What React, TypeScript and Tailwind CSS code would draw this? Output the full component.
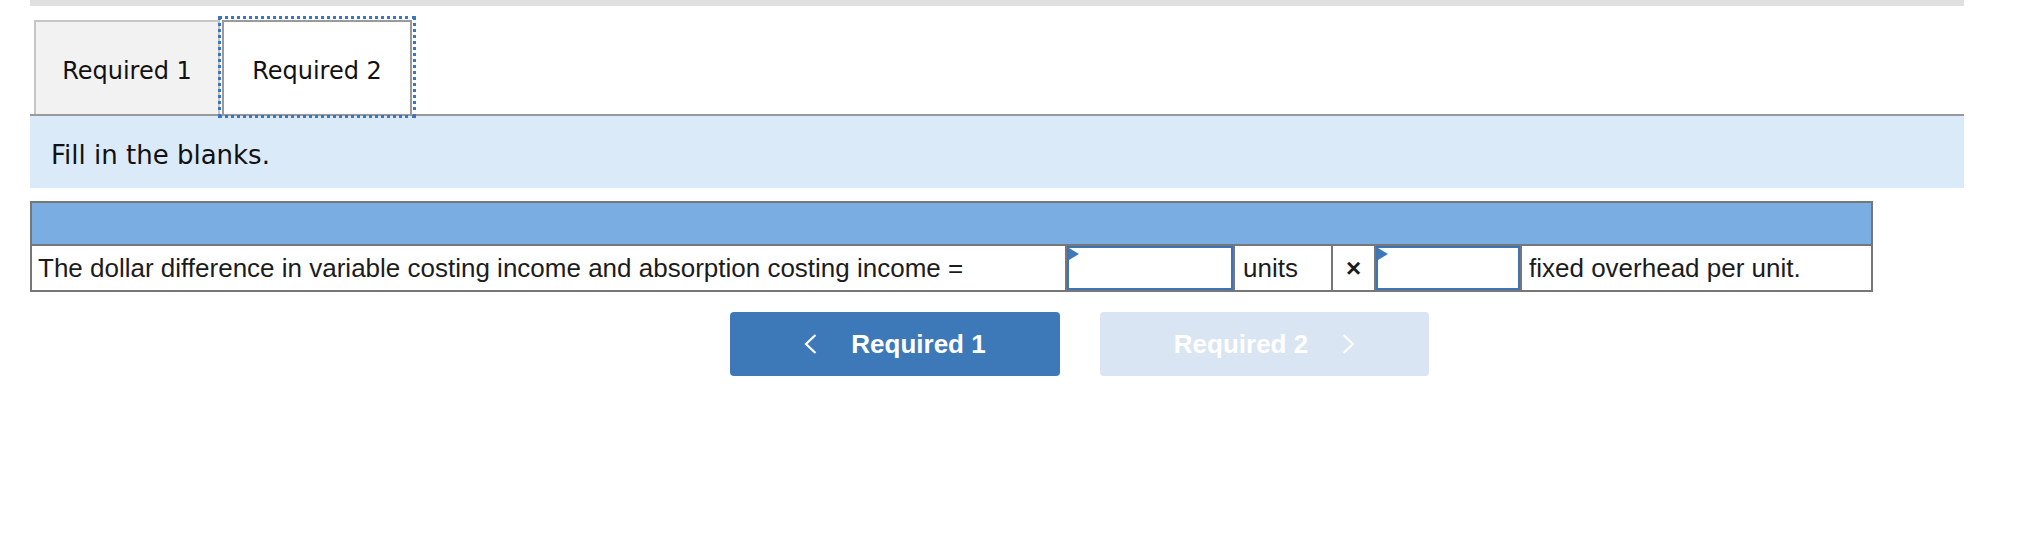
import { ReactNode } from 'react'

const tabFont = { fontFamily: '"DejaVu Sans", Verdana, sans-serif' }
const tableFont = { fontFamily: '"Liberation Sans", Arial, sans-serif' }

function Chevron({ dir }: { dir: 'left' | 'right' }) {
  return (
    <svg width="13" height="20" viewBox="0 0 13 20" fill="none" className="shrink-0">
      <path
        d={dir === 'left' ? 'M11.5 1 L2 10 L11.5 19' : 'M1.5 1 L11 10 L1.5 19'}
        stroke="white"
        strokeWidth="2.2"
        strokeLinecap="butt"
        strokeLinejoin="miter"
      />
    </svg>
  )
}

function AnswerInput({ width }: { width: string }) {
  return (
    <div className={`relative h-full ${width} border-2 border-[#3d74b6] bg-white`}>
      {/* little flag in the corner */}
      <div className="absolute left-0 top-0 w-0 h-0 border-t-[6px] border-b-[6px] border-l-[10px] border-t-transparent border-b-transparent border-l-[#3d78bb]" />
    </div>
  )
}

function Cell({ children, className = '' }: { children?: ReactNode; className?: string }) {
  return (
    <div className={`flex items-center h-full text-[26px] text-[#1c1c1c] leading-none ${className}`} style={tableFont}>
      {children}
    </div>
  )
}

export default function App() {
  return (
    <div className="w-[2018px] h-[550px] bg-white pl-[30px] pr-[54px]">
      {/* top strip */}
      <div className="h-[6px] bg-[#e0e0e0]" />

      {/* Tabs */}
      <div className="flex items-end pt-[14px] pl-[4px]">
        <div
          className="flex items-center justify-center pt-[6px] w-[186px] h-[94px] bg-[#f2f2f2] border-2 border-b-0 border-[#c6c6c6] text-[24px] text-[#111]"
          style={tabFont}
        >
          Required 1
        </div>
        <div
          className="relative z-10 flex items-center justify-center pt-[6px] ml-[2px] w-[190px] h-[94px] bg-white border-2 border-b-0 border-[#9a9a9a] outline-[3px] outline-dotted outline-[#3a76c2] outline-offset-[1px] text-[24px] text-[#111]"
          style={tabFont}
        >
          Required 2
        </div>
      </div>
      <div className="h-[2px] bg-[#999999]" />

      {/* Instructions */}
      <div className="flex items-center h-[72px] pl-[21px] pt-[6px] bg-[#dbeaf8] text-[26px] text-[#111]" style={tabFont}>
        Fill in the blanks.
      </div>

      {/* Answer table */}
      <div className="mt-[13px] w-[1843px] border-2 border-[#777777]">
        <div className="h-[43px] bg-[#7aade2] border-b-2 border-[#777777]" />
        <div className="flex h-[44px]">
          <Cell className="w-[1035px] px-[6px] border-r-2 border-[#777777]">
            The dollar difference in variable costing income and absorption costing income =
          </Cell>
          <div className="h-full border-r-2 border-[#777777]">
            <AnswerInput width="w-[166px]" />
          </div>
          <Cell className="w-[98px] px-[8px] border-r-2 border-[#777777]">units</Cell>
          <Cell className="w-[43px] justify-center border-r-2 border-[#777777] font-bold text-[24px]">×</Cell>
          <div className="h-full border-r-2 border-[#777777]">
            <AnswerInput width="w-[144px]" />
          </div>
          <Cell className="flex-1 px-[7px]">fixed overhead per unit.</Cell>
        </div>
      </div>

      {/* Navigation */}
      <div className="flex gap-[40px] mt-[20px] ml-[700px]" style={tableFont}>
        <button className="flex items-center justify-center gap-[34px] w-[330px] h-[64px] rounded-[4px] bg-[#3d78b8] text-white text-[26px] font-bold">
          <Chevron dir="left" />
          <span>Required 1</span>
        </button>
        <button className="flex items-center justify-center gap-[34px] w-[329px] h-[64px] rounded-[4px] bg-[#d9e5f2] text-white text-[26px] font-bold">
          <span>Required 2</span>
          <Chevron dir="right" />
        </button>
      </div>
    </div>
  )
}
